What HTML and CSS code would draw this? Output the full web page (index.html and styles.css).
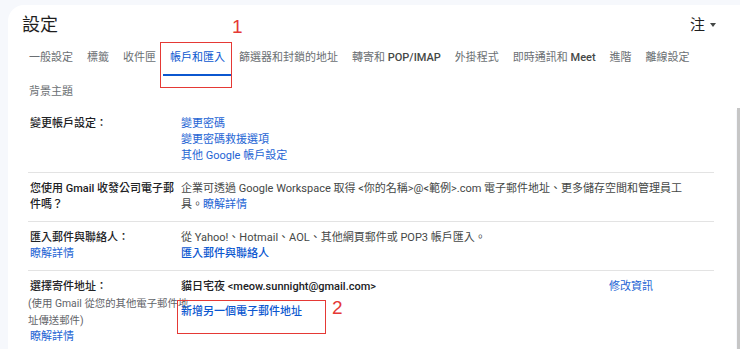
FILE: index.html
```html
<!DOCTYPE html>
<html lang="zh-Hant">
<head>
    <meta charset="UTF-8">
    <meta name="viewport" content="width=device-width, initial-scale=1.0">
    <title>設定 - 帳戶和匯入</title>
    <link rel="stylesheet" href="styles.css">
</head>
<body>
    <div class="settings">
        <!-- Header: title + tabs -->
        <div class="head">
            <div class="title-row">
                <h1>設定</h1>
                <div class="lang">注 <span class="caret"></span></div>
            </div>
            <nav class="tabs">
                <a href="#" class="tab">一般設定</a>
                <a href="#" class="tab">標籤</a>
                <a href="#" class="tab">收件匣</a>
                <a href="#" class="tab active">帳戶和匯入</a>
                <a href="#" class="tab">篩選器和封鎖的地址</a>
                <a href="#" class="tab">轉寄和 <b>POP/IMAP</b></a>
                <a href="#" class="tab">外掛程式</a>
                <a href="#" class="tab">即時通訊和 <b>Meet</b></a>
                <a href="#" class="tab">進階</a>
                <a href="#" class="tab">離線設定</a>
                <a href="#" class="tab">背景主題</a>
            </nav>
        </div>

        <!-- Settings rows -->
        <div class="main">
            <div class="content">
                <div class="row">
                    <div class="label"><strong>變更帳戶設定：</strong></div>
                    <div class="value">
                        <a href="#" class="link">變更密碼</a>
                        <a href="#" class="link">變更密碼救援選項</a>
                        <a href="#" class="link">其他 Google 帳戶設定</a>
                    </div>
                </div>

                <div class="row">
                    <div class="label"><strong>您使用 Gmail 收發公司電子郵件嗎？</strong></div>
                    <div class="value">
                        <p>企業可透過 Google Workspace 取得 &lt;你的名稱&gt;@&lt;範例&gt;.com 電子郵件地址、更多儲存空間和管理員工具。<a href="#" class="inline-link">瞭解詳情</a></p>
                    </div>
                </div>

                <div class="row">
                    <div class="label">
                        <strong>匯入郵件與聯絡人：</strong>
                        <a href="#" class="link">瞭解詳情</a>
                    </div>
                    <div class="value">
                        <p>從 Yahoo!、Hotmail、AOL、其他網頁郵件或 POP3 帳戶匯入。</p>
                        <a href="#" class="link bold">匯入郵件與聯絡人</a>
                    </div>
                </div>

                <div class="row last">
                    <div class="label">
                        <strong>選擇寄件地址：</strong>
                        <span class="hint">(使用 Gmail 從您的其他電子郵件地址傳送郵件)</span>
                        <a href="#" class="link">瞭解詳情</a>
                    </div>
                    <div class="value">
                        <div class="sender">
                            <span class="sender-name">貓日宅夜 &lt;meow.sunnight@gmail.com&gt;</span>
                            <a href="#" class="edit-link">修改資訊</a>
                        </div>
                        <a href="#" class="link bold add-link">新增另一個電子郵件地址</a>
                    </div>
                </div>
            </div>
            <div class="scrollbar"></div>
        </div>
    </div>

    <!-- Red annotations -->
    <div class="mark mark-1"></div>
    <span class="mark-num num-1">1</span>
    <div class="mark mark-2"></div>
    <span class="mark-num num-2">2</span>
</body>
</html>
```

FILE: styles.css
```css
body {
    margin: 0;
    padding: 5px 0 0 8px;
    height: 349px;
    overflow: hidden;
    box-sizing: border-box;
    background-color: #f6f8fc;
    font-family: Roboto, "Noto Sans CJK TC", sans-serif;
    font-size: 11px;
    line-height: 16px;
    color: #444746;
    position: relative;
}

a {
    text-decoration: none;
}

p {
    margin: 0;
}

/* Header */
.head {
    background-color: white;
    border-top-left-radius: 16px;
    padding: 8px 24px 0 14px;
}

.title-row {
    display: flex;
    justify-content: space-between;
    align-items: center;
}

h1 {
    margin: 0;
    font-size: 18px;
    font-weight: 400;
    line-height: 24px;
    color: #1f1f1f;
}

.lang {
    font-size: 15px;
    color: #1f1f1f;
    display: flex;
    align-items: center;
    gap: 5px;
}

.caret {
    width: 0;
    height: 0;
    border-left: 3px solid transparent;
    border-right: 3px solid transparent;
    border-top: 4px solid #444746;
}

.tabs {
    display: flex;
    flex-wrap: wrap;
    margin-top: 5px;
    margin-bottom: -3px;
}

.tab {
    padding: 8px 7px;
    border-bottom: 2px solid transparent;
    color: #6b6f73;
    white-space: nowrap;
}

.tab b {
    font-weight: 500;
    color: #444746;
}

.tab.active {
    color: #0b57d0;
    border-bottom-color: #0b57d0;
}

/* Rows */
.main {
    display: flex;
    margin-top: 1px;
    height: 241px;
}

.content {
    flex: 1;
    background-color: white;
    padding: 0 22px 0 20px;
}

.scrollbar {
    width: 3px;
    margin-left: 1px;
    background-color: #c6c6c6;
}

.row {
    display: grid;
    grid-template-columns: 151px 1fr;
    padding: 8px 13px 8px 2px;
    border-bottom: 1px solid #e3e3e3;
}

.row.last {
    border-bottom: none;
}

.label strong {
    display: block;
    font-weight: 500;
    color: #202124;
}

.label .link {
    display: block;
}

.hint {
    display: block;
    font-size: 10.4px;
    line-height: 17px;
    color: #5f6368;
    margin-left: -2px;
    margin-right: -12px;
}

.value {
    display: flex;
    flex-direction: column;
    align-items: flex-start;
}

.link, .inline-link, .edit-link {
    color: #2464d4;
}

.link.bold {
    font-weight: 500;
    color: #0b57d0;
}

.sender {
    display: flex;
    justify-content: space-between;
    align-self: stretch;
    padding-right: 48px;
}

.sender-name {
    font-weight: 500;
    color: #202124;
}

.add-link {
    margin-top: 9px;
}

/* Annotations */
.mark {
    position: absolute;
    border: 1.5px solid #e53935;
    box-sizing: border-box;
}

.mark-1 {
    left: 160px;
    top: 42px;
    width: 72px;
    height: 46px;
}

.mark-2 {
    left: 177px;
    top: 300px;
    width: 149px;
    height: 34px;
}

.mark-num {
    position: absolute;
    font-family: "Liberation Sans", sans-serif;
    font-size: 19px;
    line-height: 20px;
    color: #e53935;
}

.num-1 {
    left: 232px;
    top: 17px;
}

.num-2 {
    left: 332px;
    top: 298px;
}
```
